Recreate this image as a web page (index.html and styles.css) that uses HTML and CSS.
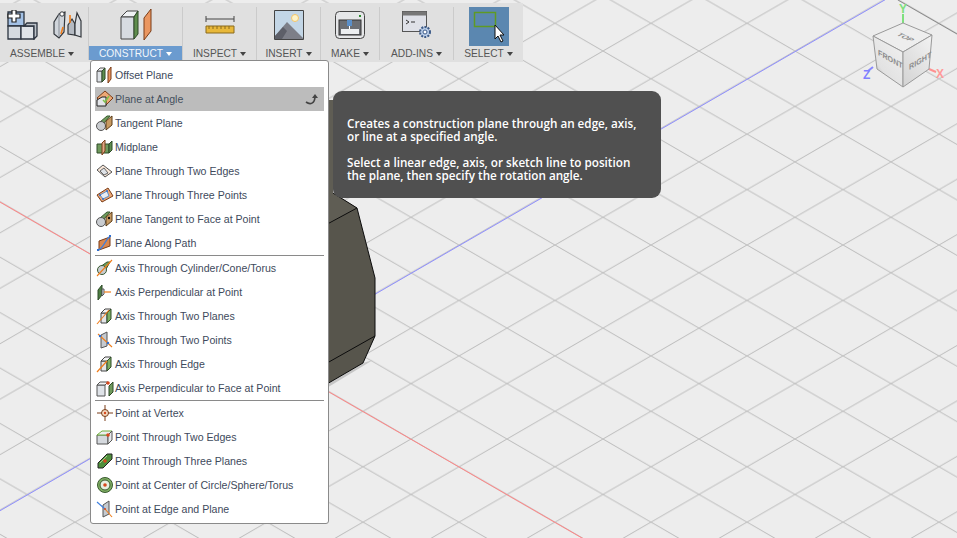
FILE: index.html
```html
<!DOCTYPE html>
<html lang="en">
<head>
<meta charset="utf-8">
<title>Construct menu</title>
<link rel="stylesheet" href="styles.css">
</head>
<body>
<div class="app">
  <svg class="scene" width="957" height="538" viewBox="0 0 957 538">
    <defs>
      <pattern id="grid" patternUnits="userSpaceOnUse" x="555" y="23.3" width="96" height="55.43">
        <path d="M0 0L96 55.43M0 55.43L96 0" class="gridline"/>
      </pattern>
      <linearGradient id="front" x1="0.7" y1="0.2" x2="0.1" y2="1">
        <stop offset="0" stop-color="#ececec"/><stop offset=".6" stop-color="#e2e2e2"/><stop offset="1" stop-color="#9a9a9a"/>
      </linearGradient>
      <linearGradient id="right" x1="0.8" y1="0" x2="0.1" y2="1">
        <stop offset="0" stop-color="#f0f0f0"/><stop offset="1" stop-color="#d4d4d4"/>
      </linearGradient>
    </defs>
    <rect width="957" height="538" fill="url(#grid)"/>
    <path d="M898 0L957 34" class="gridmajor"/>
    <path d="M0 510.7L957 -41.8" class="axis-blue"/>
    <path d="M0 202L957 754.5" class="axis-red"/>
    <path d="M363 363L373 360L320 392L320 385Z" class="body-shadow"/>
    <path d="M320 100L333 100L340 110L333 193L357 208L375 278L375 336L363 363L320 388Z" class="body-side"/>
    <path d="M320 100L333 100L340 110L333 193L357 208L320 229Z" class="body-top"/>
    <path d="M333 193L357 208L375 278L375 336L363 363L320 388M320 228L357 208M320 367L375 336" class="body-edge"/>
    <!-- view cube -->
    <path d="M903 23V14" class="cube-y"/>
    <path d="M873 67L868 71" class="cube-z"/>
    <path d="M929 69L936 72" class="cube-x"/>
    <text x="903" y="13" class="cube-axis axis-y">Y</text>
    <text x="863" y="79" class="cube-axis axis-z">Z</text>
    <text x="936" y="78" class="cube-axis axis-x">X</text>
    <path d="M903 23L932 35L903 52L873 36Z" class="face-top"/>
    <path d="M873 36L903 52V87L877 69Z" fill="url(#front)" class="face-edge"/>
    <path d="M932 35L903 52V87L929 69Z" fill="url(#right)" class="face-edge"/>
    <text transform="matrix(.9 .42 -.85 .42 896 35)" class="cube-label">TOP</text>
    <text transform="matrix(.9 .5 0 1 878 55)" class="cube-label">FRONT</text>
    <text transform="matrix(.9 -.52 0 1 909 70)" class="cube-label">RIGHT</text>
  </svg>

  <div class="toolbar">
    <div class="group group-assemble">
      <div class="tool-icons">
        <svg width="31" height="30" viewBox="0 0 31 30"><path d="M1 2H17V16H1Z" fill="#a3c1e6" stroke="#2c3440" stroke-width="1.3"/><path d="M1 16H14V29H1Z" fill="#d5dae0" stroke="#2c3440" stroke-width="1.3"/><path d="M14 16H27V29H14Z" fill="#dfe3e8" stroke="#2c3440" stroke-width="1.3"/><path d="M17 16L20 13H30V26L27 29V16Z" fill="#bcc2c9" stroke="#2c3440" stroke-width="1.3"/><path d="M5 0H9V4H13V8H9V12H5V8H1V4H5Z" fill="#fff" stroke="#222" stroke-width="1.2"/></svg>
        <svg width="29" height="29" viewBox="0 0 29 29"><path d="M1 12L6 4L12 2L11 22L6 28L1 24Z" fill="#d0d5db" stroke="#33373c" stroke-width="1.2"/><path d="M6 4V27" stroke="#8b9098"/><circle cx="9" cy="4" r="2.2" fill="#fff" stroke="#33373c"/><path d="M15 15L19 9L22 14V25L15 24Z" fill="#b4bac2" stroke="#33373c" stroke-width="1.2"/><path d="M22 14L24 3L28 11V27L22 25Z" fill="#dadee3" stroke="#33373c" stroke-width="1.2"/><path d="M8 24L10 17M17 5V13" stroke="#f07d1a" stroke-width="1.6" fill="none"/></svg>
      </div>
      <div class="tool-label">ASSEMBLE</div>
    </div>
    <div class="sep"></div>
    <div class="group group-active">
      <div class="tool-icons">
        <svg width="32" height="31" viewBox="0 0 32 31"><path d="M1 8L7 2H18L14 8Z" fill="#f0f2f4" stroke="#444"/><path d="M1 8H14V30H1Z" fill="#d7dbe1" stroke="#444"/><path d="M14 8L18 2V25L14 30Z" fill="#5f8d4e" stroke="#2f4a28"/><path d="M24 9L31 0V22L24 31Z" fill="#ea9660" stroke="#7a3d18"/></svg>
      </div>
      <div class="tool-label">CONSTRUCT</div>
    </div>
    <div class="sep"></div>
    <div class="group">
      <div class="tool-icons">
        <svg width="30" height="18" viewBox="0 0 30 18"><path d="M1 0V6M1 3H29M29 0V6" stroke="#444" fill="none"/><path d="M1 10H29V17H1Z" fill="#e8b83a" stroke="#8a6a1c"/><path d="M4 10V13M8 10V13M12 10V13M16 10V13M20 10V13M24 10V13" stroke="#8a6a1c" fill="none"/></svg>
      </div>
      <div class="tool-label">INSPECT</div>
    </div>
    <div class="sep"></div>
    <div class="group">
      <div class="tool-icons">
        <svg width="30" height="30" viewBox="0 0 30 30"><path d="M.5 .5H29.5V29.5H.5Z" fill="#c3d6e6" stroke="#444"/><circle cx="21" cy="8" r="3.5" fill="#fdf3c8" stroke="#f4c56a"/><path d="M1 26L13 12L29 28V29H1Z" fill="#7d7f88"/><path d="M1 26L9 17L13 21L8 29H1Z" fill="#5d5f68"/></svg>
      </div>
      <div class="tool-label">INSERT</div>
    </div>
    <div class="sep"></div>
    <div class="group">
      <div class="tool-icons">
        <svg width="30" height="28" viewBox="0 0 30 28"><rect x=".5" y=".5" width="29" height="27" rx="4" fill="#e6e7e9" stroke="#444"/><rect x="4" y="9" width="22" height="15" fill="#6c6f74" stroke="#333"/><rect x="6" y="18" width="18" height="5" fill="#eceef0"/><rect x="12" y="9" width="5" height="6" fill="#5b8fc8"/><path d="M14.5 15V18" stroke="#fff"/><rect x="24" y="4" width="2" height="2" fill="#2e8b2e"/></svg>
      </div>
      <div class="tool-label">MAKE</div>
    </div>
    <div class="sep"></div>
    <div class="group">
      <div class="tool-icons">
        <svg width="30" height="28" viewBox="0 0 30 28"><rect x=".5" y=".5" width="24" height="20" fill="#dfe1e8" stroke="#555"/><rect x=".5" y=".5" width="24" height="4" fill="#777"/><path d="M4 9L7 11L4 13M9 11H13" stroke="#333" fill="none"/><circle cx="23" cy="21" r="5" fill="#b8cce8" stroke="#3c5a88" stroke-width="2" stroke-dasharray="2 1.2"/><circle cx="23" cy="21" r="2" fill="#fff" stroke="#3c5a88"/></svg>
      </div>
      <div class="tool-label">ADD-INS</div>
    </div>
    <div class="sep"></div>
    <div class="group group-select">
      <div class="select-box">
        <svg width="40" height="39" viewBox="0 0 40 39"><rect x="5.5" y="5.5" width="21" height="14" fill="none" stroke="#5f9a24" stroke-width="1.5"/><path d="M26 18V32L29 29L32 35L34 34L31 28H35Z" fill="#fff" stroke="#111"/></svg>
      </div>
      <div class="tool-label">SELECT</div>
    </div>
  </div>

  <div class="menu">
    <div class="row"><svg width="18" height="18" viewBox="0 0 18 18"><path d="M1 5H6V16H1Z" fill="#dfe3e8" stroke="#555"/><path d="M1 5L4 2H9L6 5Z" fill="#f2f3f5" stroke="#555"/><path d="M6 5L9 2V13L6 16Z" fill="#5f8d4e" stroke="#2f4a28"/><path d="M12 5L15 1V13L12 17Z" fill="#ea9660" stroke="#7a3d18"/></svg><span>Offset Plane</span></div>
    <div class="row row-hover"><svg width="18" height="18" viewBox="0 0 18 18"><path d="M1 8L9 1L17 8L9 16Z" fill="#eda876" stroke="#7a3d18"/><path d="M1 10L6 7H10V16H1Z" fill="#e4e6ea" stroke="#222"/><path d="M7 10L9 12L13 6" stroke="#7fc04a" stroke-width="1.5" fill="none"/></svg><span>Plane at Angle</span><svg class="row-end" width="14" height="14" viewBox="0 0 14 14"><path d="M1 10C5 13 10 12 10 4" stroke="#444" stroke-width="1.6" fill="none"/><path d="M7 6L10 2L13 6Z" fill="#444"/></svg></div>
    <div class="row"><svg width="18" height="18" viewBox="0 0 18 18"><path d="M4 8L11 2H14L8 9Z" fill="#6f9a5c" stroke="#3a5a30"/><circle cx="5" cy="12" r="4.5" fill="#c9ccd0" stroke="#555"/><path d="M10 7L16 2V11L10 16Z" fill="#c79a62" stroke="#5b3c18"/></svg><span>Tangent Plane</span></div>
    <div class="row"><svg width="18" height="18" viewBox="0 0 18 18"><path d="M1 6H13V15H1Z" fill="#6f9a5c" stroke="#2f4a28"/><path d="M13 6L16 3V12L13 15Z" fill="#5f8d4e" stroke="#2f4a28"/><path d="M6 5L9 2V13L6 17Z" fill="#e0a988" stroke="#7a3d18"/></svg><span>Midplane</span></div>
    <div class="row"><svg width="18" height="18" viewBox="0 0 18 18"><path d="M1 8L7 3L16 10L9 15Z" fill="#f7e6d8" stroke="#555"/><path d="M4 9L8 6L12 11L8 13Z" fill="#dfe3e8" stroke="#666"/></svg><span>Plane Through Two Edges</span></div>
    <div class="row"><svg width="18" height="18" viewBox="0 0 18 18"><path d="M1 9L12 2L17 10L6 16Z" fill="#eda876" stroke="#7a3d18"/><path d="M4 9L11 5L13 10L7 13Z" fill="#e8ecf2" stroke="#5b8fc8"/><circle cx="4" cy="9" r="1" fill="#2f6fd0"/><circle cx="11" cy="5" r="1" fill="#2f6fd0"/><circle cx="7" cy="13" r="1" fill="#2f6fd0"/></svg><span>Plane Through Three Points</span></div>
    <div class="row"><svg width="18" height="18" viewBox="0 0 18 18"><path d="M4 8L11 2H14L8 9Z" fill="#6f9a5c" stroke="#3a5a30"/><circle cx="5" cy="12" r="4.5" fill="#c9ccd0" stroke="#555"/><path d="M10 7L16 2V11L10 16Z" fill="#c79a62" stroke="#5b3c18"/><circle cx="13" cy="8" r="1.2" fill="#111"/></svg><span>Plane Tangent to Face at Point</span></div>
    <div class="row"><svg width="18" height="18" viewBox="0 0 18 18"><path d="M3 7L14 3V12L3 16Z" fill="#d9874f" stroke="#7a3d18"/><path d="M2 16C7 15 8 8 14 2" stroke="#3d7fe0" stroke-width="1.2" fill="none"/><rect x="1" y="15" width="2" height="2" fill="#2f6fd0"/><rect x="13" y="1" width="2" height="2" fill="#2f6fd0"/></svg><span>Plane Along Path</span></div>
    <div class="menu-sep"></div>
    <div class="row"><svg width="18" height="18" viewBox="0 0 18 18"><path d="M4 8L11 3H14L9 12Z" fill="#6f9a5c" stroke="#3a5a30"/><circle cx="6" cy="11" r="4.5" fill="#c9ccd0" stroke="#3a5a30"/><path d="M1 17L16 1" stroke="#f07d1a" stroke-width="1.1"/></svg><span>Axis Through Cylinder/Cone/Torus</span></div>
    <div class="row"><svg width="18" height="18" viewBox="0 0 18 18"><path d="M2 7L6 2V12L2 17Z" fill="#4e7f42" stroke="#2f4a28"/><path d="M6 6H8V11L6 13Z" fill="#dfe3e8" stroke="#555"/><path d="M8 9H15" stroke="#f07d1a" stroke-width="1.2"/></svg><span>Axis Perpendicular at Point</span></div>
    <div class="row"><svg width="18" height="18" viewBox="0 0 18 18"><path d="M5 6H11V16H5Z" fill="#e2e5e9" stroke="#444"/><path d="M5 6L9 2H15L11 6Z" fill="#f2f3f5" stroke="#444"/><path d="M11 6L15 2V12L11 16Z" fill="#7fae62" stroke="#2f4a28"/><path d="M1 17L13 3" stroke="#f07d1a" stroke-width="1.1"/></svg><span>Axis Through Two Planes</span></div>
    <div class="row"><svg width="18" height="18" viewBox="0 0 18 18"><path d="M5 4L11 1V15L5 17Z" fill="#c5cad0" stroke="#555"/><path d="M2 3L16 16" stroke="#f07d1a" stroke-width="1.1"/><circle cx="4" cy="5" r="1.2" fill="#2f6fd0"/><circle cx="12" cy="12" r="1.2" fill="#2f6fd0"/></svg><span>Axis Through Two Points</span></div>
    <div class="row"><svg width="18" height="18" viewBox="0 0 18 18"><path d="M5 6H11V16H5Z" fill="#e2e5e9" stroke="#444"/><path d="M5 6L9 2H15L11 6Z" fill="#f2f3f5" stroke="#444"/><path d="M11 6L15 2V12L11 16Z" fill="#7fae62" stroke="#2f4a28"/><path d="M1 17L11 6" stroke="#f07d1a" stroke-width="1.2"/></svg><span>Axis Through Edge</span></div>
    <div class="row"><svg width="18" height="18" viewBox="0 0 18 18"><path d="M1 6H9V17H1Z" fill="#dfe3e8" stroke="#555"/><path d="M1 6L4 3H12L9 6Z" fill="#f2f3f5" stroke="#555"/><path d="M13 7L17 3V13L13 17Z" fill="#6f9a5c" stroke="#2f4a28"/><circle cx="12" cy="4" r="1.8" fill="#d8481e"/></svg><span>Axis Perpendicular to Face at Point</span></div>
    <div class="menu-sep"></div>
    <div class="row"><svg width="18" height="18" viewBox="0 0 18 18"><path d="M1 9H17M9 1V17" stroke="#7a3d18"/><circle cx="9" cy="9" r="3.5" fill="#f4d9c0" stroke="#7a3d18"/><circle cx="9" cy="9" r="1.2" fill="#d8481e"/></svg><span>Point at Vertex</span></div>
    <div class="row"><svg width="18" height="18" viewBox="0 0 18 18"><path d="M1 7H12V16H1Z" fill="#d5d9de" stroke="#555"/><path d="M1 7L6 3H16L12 7Z" fill="#eceef0" stroke="#6fae3c"/><path d="M12 7L16 3V12L12 16Z" fill="#e6e8eb" stroke="#555"/><circle cx="12" cy="7" r="1.8" fill="#d8481e"/></svg><span>Point Through Two Edges</span></div>
    <div class="row"><svg width="18" height="18" viewBox="0 0 18 18"><path d="M2 11L11 2H16V7L7 16H2Z" fill="#4f8f3c" stroke="#222"/><path d="M4 11L11 4" stroke="#a8d08a" fill="none"/><circle cx="9" cy="9" r="1.8" fill="#d8481e"/></svg><span>Point Through Three Planes</span></div>
    <div class="row"><svg width="18" height="18" viewBox="0 0 18 18"><circle cx="9" cy="9" r="7.5" fill="#7fae62" stroke="#3a5a30"/><circle cx="9" cy="9" r="5" fill="#e8efe0" stroke="#3a5a30"/><circle cx="9" cy="9" r="1.8" fill="#d8481e"/></svg><span>Point at Center of Circle/Sphere/Torus</span></div>
    <div class="row"><svg width="18" height="18" viewBox="0 0 18 18"><path d="M7 5L13 1V14L7 17Z" fill="#c5cad0" stroke="#555"/><path d="M1 2L9 9" stroke="#3d7fe0" stroke-width="1.1"/><path d="M9 9L16 17" stroke="#f07d1a" stroke-width="1.1"/><circle cx="9" cy="9" r="1" fill="#d8481e"/></svg><span>Point at Edge and Plane</span></div>
  </div>

  <div class="tooltip">
    <p>Creates a construction plane through an edge, axis, or line at a specified angle.</p>
    <p>Select a linear edge, axis, or sketch line to position the plane, then specify the rotation angle.</p>
  </div>
</div>
</body>
</html>
```

FILE: styles.css
```css
html, body {
  margin: 0;
  padding: 0;
  overflow: hidden;
}

.app {
  position: relative;
  width: 957px;
  height: 538px;
  overflow: hidden;
  background: #ededed;
  font-family: "Liberation Sans", Arial, sans-serif;
  padding-top: 3px;
  box-sizing: border-box;
}

/* 3D viewport */
.scene {
  position: absolute;
  left: 0;
  top: 0;
}
.gridline { stroke: #bdbdbd; stroke-width: 1; fill: none; }
.gridmajor { stroke: #8a8a8a; stroke-width: 1; fill: none; }
.axis-blue { stroke: #8f8fff; stroke-width: 1; fill: none; }
.axis-red { stroke: #ff8484; stroke-width: 1; fill: none; }
.body-shadow { fill: #c6c6c6; }
.body-side { fill: #57554c; }
.body-top { fill: #5f5d54; }
.body-edge { stroke: #0c0c0c; stroke-width: 1; fill: none; }

.cube-y { stroke: #7ee07e; stroke-width: 2; }
.cube-z { stroke: #8888ff; stroke-width: 2; }
.cube-x { stroke: #ff9090; stroke-width: 2; }
.cube-axis { font-size: 12px; font-weight: 700; text-anchor: start; }
.axis-y { fill: #7ee07e; text-anchor: middle; }
.axis-z { fill: #7f7fff; }
.axis-x { fill: #ff9a9a; }
.face-top { fill: #eeeeee; stroke: #9a9a9a; stroke-width: 1; }
.face-edge { stroke: #9a9a9a; stroke-width: 1; }
.cube-label { font-size: 8px; font-weight: 700; fill: #8c8c8c; }

/* Toolbar */
.toolbar {
  position: relative;
  display: flex;
  width: 523px;
  height: 59px;
  background: #e0e0e0;
}
.group {
  flex: 1 1 auto;
  display: flex;
  flex-direction: column;
  align-items: center;
  position: relative;
}
.group:nth-child(1) { flex: 0 0 88px; }
.group:nth-child(3) { flex: 0 0 93px; }
.group:nth-child(5) { flex: 0 0 73px; }
.group:nth-child(7) { flex: 0 0 63px; }
.group:nth-child(9) { flex: 0 0 58px; }
.group:nth-child(11) { flex: 0 0 73px; }
.group:nth-child(13) { flex: 0 0 69px; }
.group-assemble .tool-label { margin-right: 4px; }
.sep {
  flex: 0 0 1px;
  margin: 4px 0 2px;
  background: #cbcbcb;
}
.tool-icons {
  height: 43px;
  display: flex;
  align-items: center;
  justify-content: center;
  gap: 15px;
}
.select-box {
  margin-top: 4px;
  width: 40px;
  height: 39px;
  background: #5b87b0;
}
.select-box svg { display: block; overflow: visible; }
.tool-label {
  display: flex;
  align-items: center;
  justify-content: center;
  gap: 3px;
  height: 14px;
  box-sizing: border-box;
  padding-top: 1px;
  font-size: 10.2px;
  color: #555555;
}
.tool-label::after {
  content: "";
  border-left: 3px solid transparent;
  border-right: 3px solid transparent;
  border-top: 4px solid #444444;
}
.group-active .tool-label {
  align-self: stretch;
  background: #6b9bcf;
  color: #f2f6fb;
}
.group-active .tool-label::after { border-top-color: #ffffff; }

/* Dropdown menu */
.menu {
  position: absolute;
  left: 90px;
  top: 60px;
  width: 239px;
  height: 464px;
  box-sizing: border-box;
  padding: 2px 4px;
  background: #ffffff;
  border: 1px solid #8a8a8a;
  border-radius: 3px;
}
.row {
  display: flex;
  align-items: center;
  gap: 1px;
  height: 24px;
  padding-left: 1px;
  font-size: 10.6px;
  color: #3e4a5c;
}
.row svg { flex: none; }
.row-hover { background: #bcbcbc; color: #44505e; }
.row-end { margin-left: auto; margin-right: 5px; }
.menu-sep {
  height: 1px;
  background: #8a8a8a;
}

/* Tooltip */
.tooltip {
  position: absolute;
  left: 333px;
  top: 91px;
  width: 328px;
  height: 107px;
  box-sizing: border-box;
  padding: 26px 14px 0;
  background: #505050;
  border-radius: 9px;
  color: #ffffff;
  font-family: "Open Sans", sans-serif;
  font-size: 11.7px;
  font-weight: 600;
  line-height: 13px;
}
.tooltip p { margin: 0 0 13px; }
```
